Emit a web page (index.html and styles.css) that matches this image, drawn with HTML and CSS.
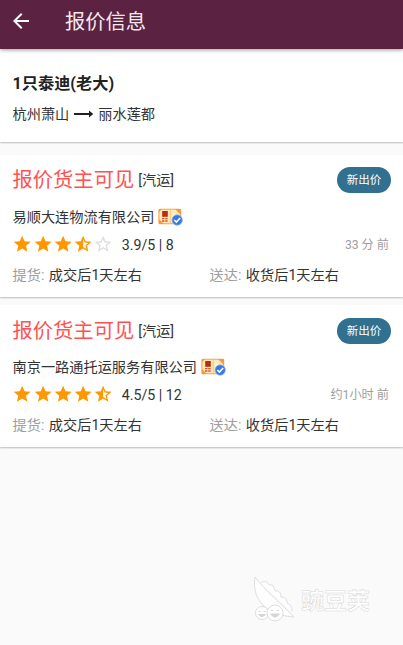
FILE: index.html
```html
<!DOCTYPE html>
<html lang="zh-CN">
<head>
<meta charset="utf-8">
<title>报价信息</title>
<link rel="stylesheet" href="styles.css">
</head>
<body>
<svg class="defs" width="0" height="0" aria-hidden="true">
  <symbol id="star" viewBox="0 0 24 24"><path d="M12 17.27L18.18 21l-1.64-7.03L22 9.24l-7.19-.61L12 2 9.19 8.63 2 9.24l5.46 4.73L5.82 21z"/></symbol>
  <symbol id="star-half" viewBox="0 0 24 24"><path d="M22 9.24l-7.19-.62L12 2 9.19 8.63 2 9.24l5.46 4.73L5.82 21 12 17.27 18.18 21l-1.63-7.03L22 9.24zM12 15.4V6.1l1.71 4.04 4.38.38-3.32 2.88 1 4.28L12 15.4z"/></symbol>
  <symbol id="star-border" viewBox="0 0 24 24"><path d="M22 9.24l-7.19-.62L12 2 9.19 8.63 2 9.24l5.46 4.73L5.82 21 12 17.27 18.18 21l-1.63-7.03L22 9.24zM12 15.4l-3.76 2.27 1-4.28-3.32-2.88 4.38-.38L12 6.1l1.71 4.04 4.38.38-3.32 2.88 1 4.28L12 15.4z"/></symbol>
  <symbol id="license" viewBox="0 0 25 18">
    <rect x=".9" y="1.200" width="21.800" height="14.600" rx="1.2" fill="#ffe9b4" stroke="#f7a540" stroke-width="1.1"/>
    <path d="M1 11v5h5zM17 1h6v6zM1 1h3L1 4z" fill="#f39a4a"/>
    <path d="M12.300 1.500v14" stroke="#f8c070" stroke-width=".8"/>
    <rect x="4.200" y="3" width="5.600" height="5.800" fill="#b92c12"/>
    <path d="M4 10.600h6M4 13h6" stroke="#e0502e" stroke-width="1.3" stroke-dasharray="2.4 .8"/>
    <path d="M14 4.500l4 4M14 8h3" stroke="#fff4d0" stroke-width="1.5"/>
    <circle cx="19.200" cy="12" r="5.200" fill="#3978e8" stroke="#8eb8f8" stroke-width=".7"/>
    <path d="M16.300 12l2.100 2 3.800-4" fill="none" stroke="#fff" stroke-width="1.6"/>
  </symbol>
</svg>
<header class="bar">
  <svg class="back" viewBox="0 0 24 24"><path d="M20 11H7.830l5.590-5.590L12 4l-8 8 8 8 1.410-1.410L7.830 13H20v-2z"/></svg>
  <h1 class="title">报价信息</h1>
</header>
<main>
  <section class="card summary">
    <h2 class="name">1只泰迪(老大)</h2>
    <div class="route"><span>杭州萧山</span><svg class="arrow" viewBox="0 0 20 10"><path d="M0 4.100h15V1.400L19.300 5 15 8.600V5.900H0z"/></svg><span>丽水莲都</span></div>
  </section>
  <section class="card quote">
    <div class="row top"><span class="price">报价货主可见</span><span class="mode">[汽运]</span><button class="bid">新出价</button></div>
    <div class="row company"><span>易顺大连物流有限公司</span><svg class="license"><use href="#license"/></svg></div>
    <div class="row rating">
      <svg class="star"><use href="#star"/></svg><svg class="star"><use href="#star"/></svg><svg class="star"><use href="#star"/></svg><svg class="star"><use href="#star-half"/></svg><svg class="star empty"><use href="#star-border"/></svg>
      <span class="score">3.9/5 | 8</span><span class="time">33 分 前</span>
    </div>
    <div class="row terms"><div><span class="label">提货:</span>成交后1天左右</div><div><span class="label">送达:</span>收货后1天左右</div></div>
  </section>
  <section class="card quote">
    <div class="row top"><span class="price">报价货主可见</span><span class="mode">[汽运]</span><button class="bid">新出价</button></div>
    <div class="row company"><span>南京一路通托运服务有限公司</span><svg class="license"><use href="#license"/></svg></div>
    <div class="row rating">
      <svg class="star"><use href="#star"/></svg><svg class="star"><use href="#star"/></svg><svg class="star"><use href="#star"/></svg><svg class="star"><use href="#star"/></svg><svg class="star"><use href="#star-half"/></svg>
      <span class="score">4.5/5 | 12</span><span class="time">约1小时 前</span>
    </div>
    <div class="row terms"><div><span class="label">提货:</span>成交后1天左右</div><div><span class="label">送达:</span>收货后1天左右</div></div>
  </section>
</main>
<div class="watermark">
  <svg class="pod" viewBox="0 0 44 48">
    <path d="M8 8q5-4 8 2 5-1 6 6 6-1 6 6 6 0 6 6 5 2 5 8"/>
    <path d="M2 2C0 15 4 25 12 32c8 7 18 9 29 10C29 29 13 17 2 2z"/>
    <circle cx="9" cy="38" r="6.500"/><circle cx="22" cy="38" r="8"/>
    <path class="face" d="M5.500 36.500h2M10.500 36.500h2M5.500 39.500q3.500 4 7 0zM18 35.500h2M24 35.500h2M17.500 39q4.500 6 9 0z"/>
  </svg>
  <span class="brand">豌豆荚</span>
</div>
</body>
</html>
```
FILE: styles.css
```css
* { box-sizing: border-box; }
body {
  margin: 0;
  height: 645px;
  overflow: hidden;
  position: relative;
  background: #fafafa;
  color: #333;
  font: 14.2px/20px Roboto, "Noto Sans CJK SC", sans-serif;
}
.defs { position: absolute; }
.bar {
  position: relative;
  height: 49px;
  padding: 0 8.5px 6px;
  display: flex;
  align-items: center;
  background: #5c2241;
  color: #f3e9ef;
  box-shadow: 0 1px 4px rgba(0, 0, 0, .4);
}
.back { width: 24px; height: 24px; margin-top: -1px; fill: #fff; }
.title { margin: 0 0 0 32.5px; font-size: 20.3px; font-weight: 400; line-height: 30px; }
.card {
  background: #fff;
  box-shadow: 0 1px 1.5px rgba(0, 0, 0, .25);
  padding: 0 13px 0 12.5px;
}
.summary { height: 93px; padding-top: 24px; }
.name { margin: 0; font-size: 16.2px; line-height: 22px; font-weight: 700; color: #222; }
.route { display: flex; align-items: center; margin-top: 9px; }
.arrow { width: 20px; height: 10px; margin: 0 4px 0 5px; fill: #222; }
.quote { height: 142px; margin-top: 13px; padding-top: 9px; }
.quote + .quote { margin-top: 8px; }
.quote + .quote .top { height: 33px; }
.quote + .quote .company { margin-top: 7px; }
.row { display: flex; align-items: center; }
.top { height: 32px; }
.price { font-size: 20.3px; line-height: 30px; color: #ff5252; }
.quote + .quote .price, .quote + .quote .mode { position: relative; top: .5px; }
.mode { margin-left: 4px; }
.bid {
  width: 54px;
  height: 26px;
  margin-left: auto;
  margin-right: -1px;
  padding: 0;
  border: 0;
  border-radius: 13px;
  background: #31708f;
  color: #fff;
  font: 11.5px/26px Roboto, "Noto Sans CJK SC", sans-serif;
}
.quote:not(.quote + .quote) .bid { margin-top: -1px; }
.company { height: 26px; margin-top: 8px; }
.license { width: 25px; height: 18px; margin-left: 4px; }
.rating { height: 29px; margin-left: -.3px; }
.star { width: 20.3px; height: 20.3px; fill: #ff9800; }
.empty { fill: #dedede; }
.score { margin-left: 8px; }
.time { margin-left: auto; margin-right: 1px; font-size: 12.2px; color: #9e9e9e; }
.terms { height: 31px; }
.terms > div { flex: 0 0 197px; white-space: nowrap; }
.label { margin-right: 4.5px; color: #9e9e9e; }
.watermark {
  position: absolute;
  left: 253px;
  top: 575px;
  display: flex;
  align-items: center;
}
.pod { width: 44px; height: 48px; fill: #fff; stroke: #dedede; stroke-width: 1; }
.face { fill: #d5d5d5; stroke: #d5d5d5; }
.brand {
  margin: 6px 0 0 4px;
  font-size: 23px;
  line-height: 30px;
  font-weight: 700;
  color: #fff;
  -webkit-text-stroke: .5px #d8d8d8;
}
```
